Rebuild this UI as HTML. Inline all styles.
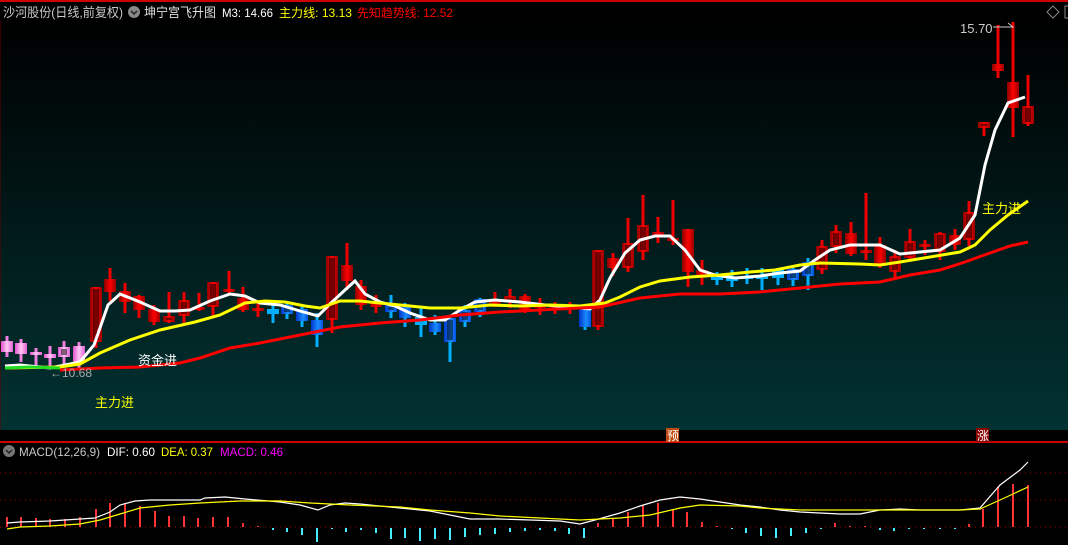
<!DOCTYPE html>
<html><head><meta charset="utf-8"><style>
html,body{margin:0;padding:0;background:#000;width:1068px;height:545px;overflow:hidden}
svg{display:block}
text{font-family:"Liberation Sans","Noto Sans CJK SC",sans-serif}
</style></head><body>
<svg id="s" width="1068" height="545" viewBox="0 0 1068 545" xmlns="http://www.w3.org/2000/svg">
<defs>
<linearGradient id="bg" x1="0" y1="0" x2="0" y2="1"><stop offset="0" stop-color="#000"/><stop offset="1" stop-color="#023232"/></linearGradient>
<linearGradient id="gr" x1="0" y1="0" x2="1" y2="0"><stop offset="0" stop-color="#800"/><stop offset=".5" stop-color="#f00"/><stop offset="1" stop-color="#900"/></linearGradient>
<linearGradient id="gb" x1="0" y1="0" x2="1" y2="0"><stop offset="0" stop-color="#0036c8"/><stop offset=".6" stop-color="#1a8cff"/><stop offset="1" stop-color="#0050e0"/></linearGradient>
<linearGradient id="gp" x1="0" y1="0" x2="1" y2="0"><stop offset="0" stop-color="#e050d0"/><stop offset=".5" stop-color="#ffc8f0"/><stop offset="1" stop-color="#e060d8"/></linearGradient>
</defs>
<rect x="0" y="0" width="1068" height="545" fill="#000"/>
<rect x="0" y="20" width="1068" height="410" fill="url(#bg)"/>
<line x1="0" y1="1" x2="1068" y2="1" stroke="#c00" stroke-width="2"/>
<line x1="0" y1="442" x2="1068" y2="442" stroke="#c00" stroke-width="2"/>
<line x1="0" y1="20" x2="0" y2="430" stroke="#600" stroke-width="1"/>
<!-- header -->
<text x="3" y="17" font-size="13" fill="#c8c8c8" textLength="120" lengthAdjust="spacingAndGlyphs">沙河股份(日线,前复权)</text>
<circle cx="134" cy="12" r="6" fill="#888"/><path d="M131 11 l3 3 l3 -3" stroke="#222" stroke-width="1.5" fill="none"/>
<text x="144" y="17" font-size="13" fill="#e0e0e0" textLength="72" lengthAdjust="spacingAndGlyphs">坤宁宫飞升图</text>
<text x="222" y="17" font-size="12" fill="#fff" textLength="51" lengthAdjust="spacingAndGlyphs">M3: 14.66</text>
<text x="279" y="17" font-size="12" fill="#ff0" textLength="73" lengthAdjust="spacingAndGlyphs">主力线: 13.13</text>
<text x="357" y="17" font-size="12" fill="#f00" textLength="96" lengthAdjust="spacingAndGlyphs">先知趋势线: 12.52</text>
<path d="M1053 6 l6 6 l-6 6 l-6 -6z" stroke="#888" fill="none"/>
<rect x="1065" y="6" width="6" height="12" stroke="#888" fill="none"/>
<g id="cand"></g>
<polyline fill="none" stroke="#fff" stroke-width="3" points="5,366 20,365 50,368 80,362 94,345 108,305 120,294 140,302 160,311 175,311 190,310 210,301 230,294 245,296 260,303 280,305 300,311 318,316 331,303 345,290 355,281 365,294 380,302 395,306 410,313 430,320 445,320 460,310 475,302 495,300 520,302 545,305 570,307 590,309 600,300 610,278 625,253 640,240 655,236 670,236 685,250 700,270 715,275 735,278 760,276 780,273 800,271 815,260 830,250 850,245 865,245 880,245 900,254 920,252 940,250 960,238 975,215 985,165 995,130 1008,103 1025,97"/>
<polyline fill="none" stroke="#ff0" stroke-width="3" points="5,368 60,367 80,364 100,353 130,340 160,330 195,322 220,315 245,303 265,301 285,302 305,306 320,308 340,301 360,301 400,305 430,308 460,308 490,305 520,306 550,305 580,306 605,303 620,297 640,287 660,281 690,277 720,275 750,272 775,270 800,265 820,263 860,264 880,265 900,262 930,257 960,252 975,245 990,230 1008,215 1028,201"/>
<polyline fill="none" stroke="#22dd22" stroke-width="3" points="5,368 30,367 60,368"/>
<polyline fill="none" stroke="#f00" stroke-width="3" points="60,370 100,368 140,367 180,363 200,358 230,348 260,343 300,335 340,327 380,323 420,320 460,315 500,312 540,310 580,308 600,307 640,298 680,294 720,294 760,292 800,288 840,284 880,282 910,275 940,270 965,262 990,253 1010,246 1028,242"/>
<text x="960" y="33" font-size="13" fill="#ccc">15.70</text>
<path d="M993 27 h20 m-5 -4 l5 4 l-5 0" stroke="#ccc" fill="none"/>
<text x="50" y="377" font-size="12" fill="#aaa">←10.68</text>
<text x="138" y="365" font-size="13" fill="#fff">资金进</text>
<text x="95" y="407" font-size="13" fill="#ff0">主力进</text>
<text x="982" y="213" font-size="13" fill="#ff0">主力进</text>
<rect x="666" y="428" width="13" height="14" fill="#c04a10"/><text x="667" y="440" font-size="12" fill="#fff">预</text>
<rect x="976" y="428" width="13" height="14" fill="#8a0000"/><text x="977" y="440" font-size="12" fill="#fff">涨</text>
<!-- MACD -->
<circle cx="9" cy="451" r="6" fill="#777"/><path d="M6 450 l3 3 l3 -3" stroke="#222" stroke-width="1.5" fill="none"/>
<text x="19" y="456" font-size="12" fill="#c8c8c8" textLength="81" lengthAdjust="spacingAndGlyphs">MACD(12,26,9)</text>
<text x="107" y="456" font-size="12" fill="#fff" textLength="48" lengthAdjust="spacingAndGlyphs">DIF: 0.60</text>
<text x="161" y="456" font-size="12" fill="#ff0" textLength="52" lengthAdjust="spacingAndGlyphs">DEA: 0.37</text>
<text x="220" y="456" font-size="12" fill="#f0f" textLength="63" lengthAdjust="spacingAndGlyphs">MACD: 0.46</text>
<g stroke="#900" stroke-dasharray="1,4"><line x1="0" y1="473" x2="1068" y2="473"/><line x1="0" y1="500" x2="1068" y2="500"/><line x1="0" y1="527" x2="1068" y2="527"/></g>
<g id="bars"></g>
<polyline fill="none" stroke="#fff" stroke-width="1.2" points="7,523 20,522 50,521 80,519 95,518 110,512 120,505 135,501 150,500 200,500 205,498 225,497 245,499 280,502 300,505 318,510 330,505 345,503 360,504 400,508 430,511 470,519 500,519 560,521 580,524 595,520 620,513 640,506 660,500 680,497 700,499 720,502 740,505 760,507 780,510 800,512 820,513 840,514 860,514 880,510 900,509 920,510 960,510 980,508 1000,485 1020,470 1028,462"/>
<polyline fill="none" stroke="#ff0" stroke-width="1.2" points="7,529 20,527 50,526 80,524 100,520 120,514 140,508 170,505 200,503 240,501 280,501 310,503 350,505 400,507 430,510 470,513 500,516 560,519 580,520 600,519 620,518 650,515 680,508 700,505 740,506 760,508 800,510 830,510 900,510 960,510 980,509 1000,500 1028,487"/>
</svg>
<script>
var C=[[7,341,352,336,357,'p'],[21,343,354,339,362,'p'],[36,352,355,348,366,'p'],[50,354,358,346,367,'p'],[64,347,357,341,366,'ph'],[79,346,362,342,369,'p'],
[96,287,342,287,348,'h'],[110,279,292,268,301,'r'],[125,291,302,283,313,'r'],[139,296,310,295,318,'r'],[154,309,322,305,325,'r'],[169,316,322,292,323,'h'],[184,300,316,292,323,'h'],[199,307,310,293,311,'r'],[213,282,307,282,316,'h'],[229,289,292,271,295,'h'],[243,298,310,287,312,'r'],[258,308,309,303,317,'r'],
[273,309,314,305,323,'c'],[287,305,314,302,319,'bh'],[302,309,321,307,327,'b'],[317,320,335,313,347,'b'],[332,256,320,256,333,'h'],[347,265,281,243,290,'r'],[361,286,305,280,310,'r'],[376,302,307,295,313,'r'],
[391,305,312,295,318,'bh'],[405,307,318,303,327,'b'],[421,317,325,308,337,'c'],[435,323,332,315,335,'b'],[450,318,342,318,362,'bh'],[465,310,322,305,327,'bh'],[480,299,312,298,317,'bh'],
[495,299,304,292,307,'h'],[510,296,302,289,308,'h'],[525,296,311,294,313,'r'],[540,305,308,298,315,'h'],[555,305,308,302,314,'r'],[570,305,308,302,314,'r'],[585,309,327,309,330,'b'],
[598,250,327,250,330,'h'],[613,258,268,253,276,'r'],[628,243,268,218,272,'h'],[643,225,252,195,260,'h'],[658,232,236,217,243,'r'],[673,238,241,200,245,'r'],[688,229,272,229,287,'r'],[702,270,275,260,285,'r'],
[717,277,280,272,285,'c'],[732,278,280,270,287,'c'],[747,276,278,268,284,'c'],[762,276,279,268,290,'c'],[778,270,278,268,285,'c'],[793,269,280,268,286,'bh'],[808,262,276,258,290,'bh'],
[822,246,270,240,274,'h'],[836,231,247,225,253,'h'],[851,233,254,222,256,'r'],[866,250,253,193,260,'r'],[880,245,265,237,268,'r'],[895,256,272,250,280,'h'],[910,241,258,229,261,'h'],[925,244,247,240,255,'r'],[940,233,252,232,260,'h'],[955,235,245,229,250,'r'],[969,212,240,201,246,'h'],
[984,122,128,122,136,'h'],[998,64,71,25,78,'r'],[1013,82,108,22,137,'r'],[1028,106,124,75,126,'h']];
var g='';
C.forEach(function(c){var x=c[0],t=c[5],f,w;
 if(t[0]=='p'){f='url(#gp)';w='#f080e0'}else if(t[0]=='b'){f='url(#gb)';w='#00b0ff'}else if(t=='c'){f='#00b0ff';w='#00b0ff'}else{f='url(#gr)';w='#e00'}
 g+='<rect x="'+(x-1.5)+'" y="'+c[3]+'" width="3" height="'+(c[4]-c[3])+'" fill="'+w+'"/>';
 var h=Math.max(c[2]-c[1],3);
 g+='<rect x="'+(x-6)+'" y="'+c[1]+'" width="12" height="'+h+'" fill="'+f+'"/>';
 if(t.indexOf('h')>=0&&h>5){for(var i=-2;i<=2;i+=2)g+='<rect x="'+(x+i-0.5)+'" y="'+(c[1]+2)+'" width="1" height="'+(h-4)+'" fill="#000"/>';}
});
document.getElementById('cand').innerHTML=g;
var B=[[7,517],[21,517],[36,518],[50,519],[65,519],[80,517],[96,509],[110,503],[125,503],[140,506],[155,511],[169,516],[184,516],[198,518],[213,517],[228,517],[243,523],[258,526],[273,529],[287,531],[302,534],[317,541],[332,528],[346,531],[361,529],[376,532],[391,538],[405,537],[420,540],[435,538],[450,539],[465,536],[480,534],[495,533],[510,531],[525,530],[540,529],[555,530],[569,533],[584,537],[598,523],[613,519],[628,512],[643,505],[658,503],[673,510],[687,512],[702,522],[717,526],[732,528],[746,532],[761,535],[776,537],[791,535],[806,532],[821,528],[835,523],[850,526],[865,526],[880,529],[894,530],[909,528],[924,528],[940,528],[955,528],[969,524],[983,509],[998,487],[1013,484],[1028,485]];
var b='';B.forEach(function(v){var y=v[1];if(y<527)b+='<rect x="'+(v[0]-1)+'" y="'+y+'" width="2" height="'+(527-y)+'" fill="#f33"/>';else b+='<rect x="'+(v[0]-1)+'" y="528" width="2" height="'+(y-527)+'" fill="#4ef"/>';});
document.getElementById('bars').innerHTML=b;
</script>
</body></html>
